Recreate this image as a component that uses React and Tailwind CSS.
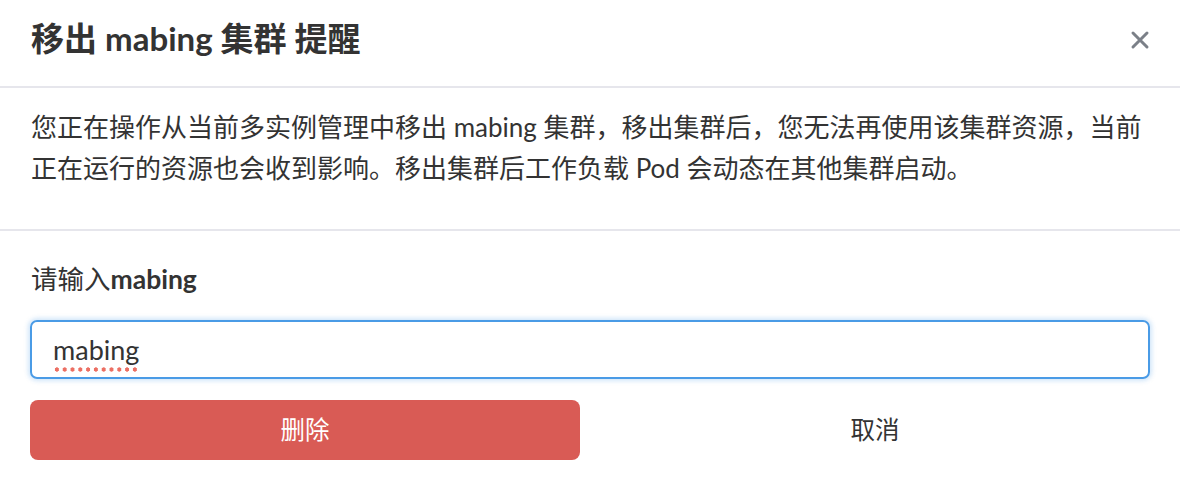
export default function App() {
  const font = { fontFamily: 'Lato, "Noto Sans CJK SC", sans-serif' };
  return (
    <div className="w-[1180px] h-[480px] bg-white text-[#333] overflow-hidden" style={font}>
      <div className="h-[86px] flex items-center justify-between pl-[31px] pr-[30px]">
        <h1 className="text-[33px] font-bold leading-none pb-[10px]">移出 mabing 集群 提醒</h1>
        <svg width="20" height="20" viewBox="0 0 20 20" className="mb-[6px]">
          <path d="M3 3L17 17M17 3L3 17" stroke="#7b8088" strokeWidth="3" strokeLinecap="round" />
        </svg>
      </div>
      <div className="h-[2px] bg-[#e6e6ec]" />
      <div className="h-[141px] px-[31px] pt-[19px]">
        <p className="text-[26px] leading-[41px]">
          您正在操作从当前多实例管理中移出 mabing 集群，移出集群后，您无法再使用该集群资源，当前正在运行的资源也会收到影响。移出集群后工作负载 Pod 会动态在其他集群启动。
        </p>
      </div>
      <div className="h-[2px] bg-[#e6e6ec]" />
      <div className="px-[30px] pt-[32px]">
        <div className="text-[26.5px] leading-[32px] pl-[1px]">
          请输入<span className="font-bold">mabing</span>
        </div>
        <div className="mt-[25px] h-[59px] rounded-[7px] border-2 border-[#4a9be6] shadow-[0_0_4px_2px_rgba(74,155,230,0.25)] flex items-center px-[21px]">
          <span className="relative text-[27px] leading-none">
            mabing
            <span className="absolute left-0 right-0 -bottom-[9px] h-[5px] bg-[radial-gradient(circle,#ec6f63_1.9px,transparent_2.4px)] bg-[length:7.8px_5px] bg-repeat-x" />
          </span>
        </div>
        <div className="mt-[21px] grid grid-cols-2 gap-[20px]">
          <button className="h-[60px] rounded-[8px] bg-[#d95b55] text-white text-[24.5px]">删除</button>
          <button className="h-[60px] text-[24.5px] text-[#333]">取消</button>
        </div>
      </div>
    </div>
  );
}
